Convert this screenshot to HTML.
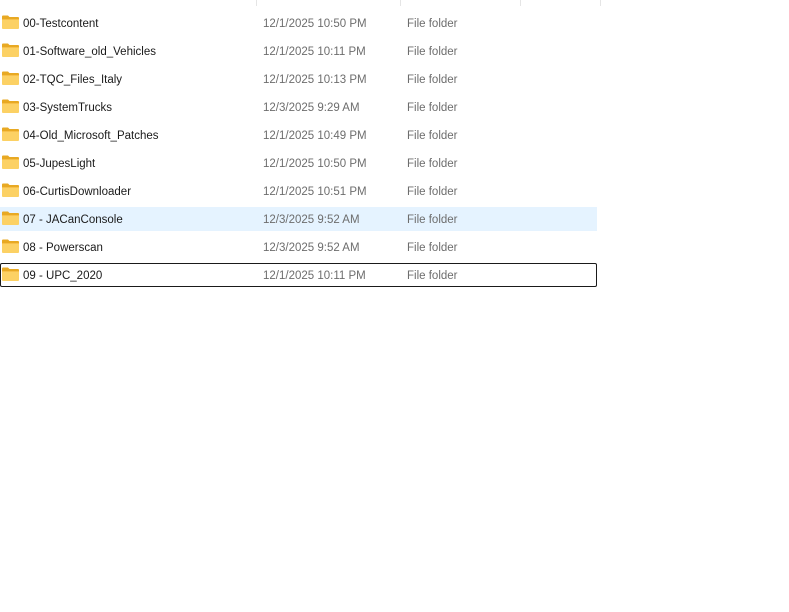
<!DOCTYPE html>
<html><head><style>
body{margin:0;width:789px;height:612px;background:#fff;font-family:"Liberation Sans",sans-serif;font-size:11.5px;position:relative;overflow:hidden}
.sep{position:absolute;top:0;width:1px;height:6px;background:#e5e5e5}
.row{position:absolute;left:0;width:597px;height:24px}
.row svg{position:absolute;left:2px;top:4px}
.n{position:absolute;left:23px;top:7px;color:#1a1a1a}
.d{position:absolute;left:263px;top:7px;color:#6d6d6d}
.t{position:absolute;left:407px;top:7px;color:#6d6d6d}
.hl{background:#e5f3ff}
.fo{box-shadow:inset 0 0 0 1px #1a1a1a;border-radius:2px}
</style></head><body>
<div class="sep" style="left:256px"></div><div class="sep" style="left:400px"></div><div class="sep" style="left:520px"></div><div class="sep" style="left:600px"></div>
<div id="rows"></div>
<script>
var r=[["00-Testcontent","12/1/2025 10:50 PM"],["01-Software_old_Vehicles","12/1/2025 10:11 PM"],["02-TQC_Files_Italy","12/1/2025 10:13 PM"],["03-SystemTrucks","12/3/2025 9:29 AM"],["04-Old_Microsoft_Patches","12/1/2025 10:49 PM"],["05-JupesLight","12/1/2025 10:50 PM"],["06-CurtisDownloader","12/1/2025 10:51 PM"],["07 - JACanConsole","12/3/2025 9:52 AM"],["08 - Powerscan","12/3/2025 9:52 AM"],["09 - UPC_2020","12/1/2025 10:11 PM"]];
var ic='<svg width="17" height="14" viewBox="0 0 17 14"><path d="M0 1.5Q0 0.5 1 0.5H6L7.5 2H16Q17 2 17 3V4H0Z" fill="#e8a923"/><path d="M0 4H17V13Q17 14 16 14H1Q0 14 0 13Z" fill="#fcd164"/><path d="M0 4H17V5H0Z" fill="#f7c04a"/></svg>';
var h='';r.forEach(function(x,i){var c=i==7?' hl':i==9?' fo':'';h+='<div class="row'+c+'" style="top:'+(11+28*i)+'px">'+ic+'<span class="n">'+x[0]+'</span><span class="d">'+x[1]+'</span><span class="t">File folder</span></div>'});
document.getElementById('rows').innerHTML=h;
</script>
</body></html>
